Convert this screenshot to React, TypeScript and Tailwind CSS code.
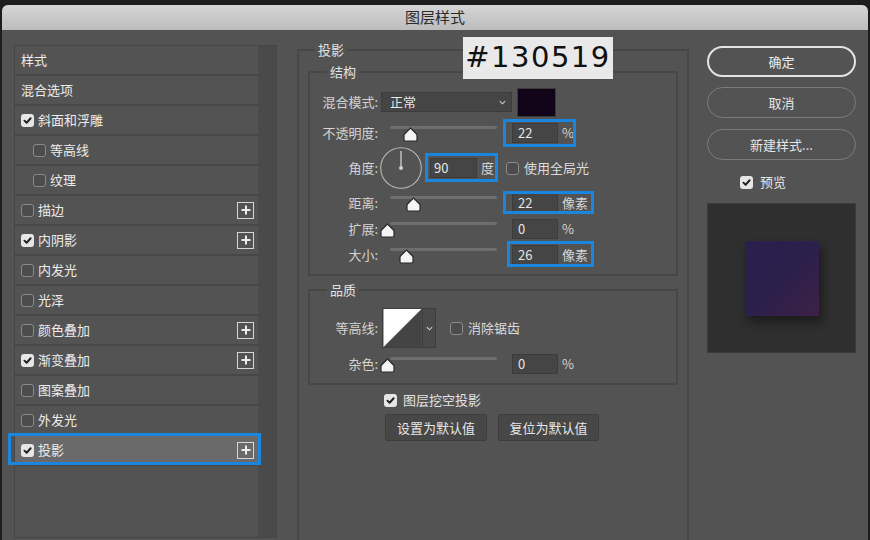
import React from 'react';

type Item = { t: string; cb?: boolean | null; indent?: boolean; plus?: boolean; sel?: boolean };

const items: Item[] = [
  { t: '样式', cb: null },
  { t: '混合选项', cb: null },
  { t: '斜面和浮雕', cb: true },
  { t: '等高线', cb: false, indent: true },
  { t: '纹理', cb: false, indent: true },
  { t: '描边', cb: false, plus: true },
  { t: '内阴影', cb: true, plus: true },
  { t: '内发光', cb: false },
  { t: '光泽', cb: false },
  { t: '颜色叠加', cb: false, plus: true },
  { t: '渐变叠加', cb: true, plus: true },
  { t: '图案叠加', cb: false },
  { t: '外发光', cb: false },
  { t: '投影', cb: true, plus: true, sel: true },
];

const Check = ({ on }: { on?: boolean }) =>
  on ? (
    <span className="flex w-[13px] h-[13px] rounded-[3px] bg-[#e6e6e6] items-center justify-center shrink-0">
      <svg viewBox="0 0 10 10" className="w-[9px] h-[9px]">
        <path d="M1.6 5.2 L4 7.5 L8.5 2.5" fill="none" stroke="#1e1e1e" strokeWidth="2.1" strokeLinecap="round" strokeLinejoin="round" />
      </svg>
    </span>
  ) : (
    <span className="flex w-[13px] h-[13px] rounded-[3px] border border-[#8a8a8a] bg-[#4c4c4c] shrink-0" />
  );

const Plus = () => (
  <span className="w-[17px] h-[17px] border-[1.5px] border-[#d6d6d6] flex items-center justify-center shrink-0">
    <svg viewBox="0 0 10 10" className="w-[10px] h-[10px]">
      <path d="M5 0.5 V9.5 M0.5 5 H9.5" stroke="#ececec" strokeWidth="2" />
    </svg>
  </span>
);

const Thumb = ({ x }: { x: number }) => (
  <svg viewBox="0 0 15 15" className="absolute top-[7px] w-[15px] h-[15px]" style={{ left: x - 7 }}>
    <path d="M7.5 1 L13.5 7 Q14 7.6 14 8.5 L14 12.5 Q14 14 12.5 14 L2.5 14 Q1 14 1 12.5 L1 8.5 Q1 7.6 1.5 7 Z" fill="#f4f4f4" stroke="#2a2a2a" strokeWidth="1.2" strokeLinejoin="round" />
  </svg>
);

const Slider = ({ pos }: { pos: number }) => (
  <div className="relative ml-[12px] w-[107px] h-full shrink-0">
    <div className="absolute left-0 right-0 top-[6px] h-[3px] bg-[#6e6e6e] rounded-full" />
    <Thumb x={pos} />
  </div>
);

const Field = ({ v, unit, hl }: { v: string; unit: string; hl?: string }) => (
  <div className="relative ml-[15px] flex items-center">
    <div className="w-[46px] h-[20px] bg-[#454545] border border-[#3c3c3c] pl-[5px] flex items-center text-[13px] text-[#e6e6e6]">{v}</div>
    <span className="ml-[4px] text-[13px] text-[#d6d6d6]">{unit}</span>
    {hl && <span className={`absolute border-[3px] border-[#1b86de] ${hl}`} />}
  </div>
);

const Label = ({ t }: { t: string }) => (
  <span className="w-[68px] text-right text-[13px] text-[#d4d4d4] shrink-0">{t}</span>
);

export default function App() {
  return (
    <div className="relative w-[870px] h-[540px] bg-[#1d1d1d] pt-[5px] overflow-hidden font-['Noto_Sans_CJK_SC',sans-serif]">
      <div className="h-full mx-[2px] rounded-t-[6px] overflow-hidden bg-[#535353] flex flex-col">
        <div className="h-[25px] shrink-0 bg-gradient-to-b from-[#d5d5d5] to-[#bcbcbc] flex items-center justify-center text-[15px] text-[#2b2b2b]">
          图层样式
        </div>

        <div className="flex items-start">
          {/* left style list */}
          <div className="ml-[12px] mt-[15px] h-[493px] flex border border-[#464646] shrink-0">
            <div className="w-[243px]">
              {items.map((it, i) => (
                <div
                  key={i}
                  className={`relative h-[30px] border-b-2 border-[#474747] flex items-center pr-[4px] text-[13px] text-[#ececec] ${it.sel ? 'bg-[#6a6a6a]' : ''} ${it.indent ? 'pl-[18px]' : 'pl-[6px]'}`}
                >
                  {it.cb !== null && it.cb !== undefined && <Check on={it.cb} />}
                  <span className={it.cb === null ? '' : 'ml-[4px]'}>{it.t}</span>
                  <span className="flex-1" />
                  {it.plus && <Plus />}
                  {it.sel && <span className="absolute -left-[7px] -right-[3px] -top-[3px] -bottom-[1px] border-[3px] border-[#1b86de] z-10" />}
                </div>
              ))}
            </div>
            <div className="w-[18px] bg-[#4a4a4a]" />
          </div>

          {/* middle settings */}
          <fieldset className="ml-[20px] mt-[12px] w-[392px] h-[520px] border-2 border-[#474747] px-[9px] shrink-0">
            <legend className="ml-[7px] px-[3px] text-[13px] leading-[16px] text-[#e2e2e2]">投影</legend>

            <fieldset className="mt-[6px] border-2 border-[#474747] pb-[6px]">
              <legend className="ml-[17px] px-[3px] text-[13px] leading-[16px] text-[#e2e2e2]">结构</legend>

              <div className="mt-[9px] h-[26px] flex items-center">
                <Label t="混合模式:" />
                <div className="ml-[3px] w-[131px] h-[20px] bg-[#454545] border border-[#3c3c3c] flex items-center pl-[8px] pr-[5px] text-[13px] text-[#e6e6e6]">
                  <span>正常</span>
                  <span className="flex-1" />
                  <svg viewBox="0 0 8 5" className="w-[7px] h-[5px]">
                    <path d="M1 1 L4 4 L7 1" fill="none" stroke="#cfcfcf" strokeWidth="1.2" />
                  </svg>
                </div>
                <div className="ml-[5px] w-[39px] h-[29px] bg-[#130519] border border-[#3a3a3a]" />
              </div>

              <div className="mt-[5px] h-[26px] flex items-center">
                <Label t="不透明度:" />
                <Slider pos={20} />
                <Field v="22" unit="%" hl="-left-[9px] -top-[4px] w-[73px] h-[28px]" />
              </div>

              <div className="h-[44px] flex items-center">
                <Label t="角度:" />
                <svg viewBox="0 0 42 42" className="ml-[2px] w-[42px] h-[42px] shrink-0">
                  <circle cx="21" cy="21" r="20.3" fill="none" stroke="#b9b9b9" strokeWidth="1.1" />
                  <path d="M21 21 V4" stroke="#d0d0d0" strokeWidth="1.3" />
                  <circle cx="21" cy="21" r="2" fill="#d0d0d0" />
                </svg>
                <div className="relative ml-[8px] flex items-center">
                  <div className="w-[47px] h-[20px] bg-[#454545] border border-[#3c3c3c] pl-[3px] flex items-center text-[13px] text-[#e6e6e6]">90</div>
                  <span className="ml-[4px] text-[13px] text-[#d6d6d6]">度</span>
                  <span className="absolute -left-[5px] -top-[5px] w-[73px] h-[29px] border-[3px] border-[#1b86de]" />
                </div>
                <div className="ml-[12px]"><Check on={false} /></div>
                <span className="ml-[5px] text-[13px] text-[#dcdcdc]">使用全局光</span>
              </div>

              <div className="h-[26px] flex items-center">
                <Label t="距离:" />
                <Slider pos={23} />
                <Field v="22" unit="像素" hl="-left-[9px] -top-[2px] w-[91px] h-[23px]" />
              </div>

              <div className="h-[26px] flex items-center">
                <Label t="扩展:" />
                <Slider pos={-3} />
                <Field v="0" unit="%" />
              </div>

              <div className="h-[26px] flex items-center">
                <Label t="大小:" />
                <Slider pos={16} />
                <Field v="26" unit="像素" hl="-left-[5px] -top-[4px] w-[87px] h-[26px]" />
              </div>
            </fieldset>

            <fieldset className="mt-[6px] border-2 border-[#474747] pb-[6px]">
              <legend className="ml-[17px] px-[3px] text-[13px] leading-[16px] text-[#e2e2e2]">品质</legend>

              <div className="mt-[10px] h-[40px] flex items-center">
                <Label t="等高线:" />
                <div className="ml-[4px] flex h-[40px] border border-[#3e3e3e]">
                  <svg viewBox="0 0 40 40" className="w-[39px] h-[38px]">
                    <rect width="40" height="40" fill="#444444" />
                    <path d="M0 0 H40 L0 40 Z" fill="#ffffff" />
                  </svg>
                  <div className="w-[13px] bg-[#4a4a4a] border-l border-[#3c3c3c] flex items-center justify-center">
                    <svg viewBox="0 0 8 5" className="w-[7px] h-[5px]">
                      <path d="M1 1 L4 4 L7 1" fill="none" stroke="#cfcfcf" strokeWidth="1.2" />
                    </svg>
                  </div>
                </div>
                <div className="ml-[14px]"><Check on={false} /></div>
                <span className="ml-[5px] text-[13px] text-[#dcdcdc]">消除锯齿</span>
              </div>

              <div className="mt-[3px] h-[26px] flex items-center">
                <Label t="杂色:" />
                <Slider pos={-3} />
                <Field v="0" unit="%" />
              </div>
            </fieldset>

            <div className="mt-[7px] pl-[76px] h-[16px] flex items-center">
              <Check on />
              <span className="ml-[6px] text-[13px] text-[#e2e2e2]">图层挖空投影</span>
            </div>
            <div className="mt-[6px] pl-[77px] flex gap-[11px]">
              <button className="w-[102px] h-[27px] bg-[#474747] border border-[#3d3d3d] rounded-[2px] text-[13px] text-[#e6e6e6]">设置为默认值</button>
              <button className="w-[101px] h-[27px] bg-[#474747] border border-[#3d3d3d] rounded-[2px] text-[13px] text-[#e6e6e6]">复位为默认值</button>
            </div>
          </fieldset>

          {/* right buttons */}
          <div className="ml-[18px] mt-[16px] w-[149px] flex flex-col shrink-0">
            <button className="h-[31px] rounded-full border-2 border-[#e4e4e4] text-[13px] text-[#ededed]">确定</button>
            <button className="mt-[10px] h-[31px] rounded-full border-[1.5px] border-[#7c7c7c] text-[13px] text-[#e6e6e6]">取消</button>
            <button className="mt-[11px] h-[31px] rounded-full border-[1.5px] border-[#7c7c7c] text-[13px] text-[#e6e6e6]">新建样式...</button>
            <div className="mt-[14px] h-[16px] pl-[33px] flex items-center">
              <Check on />
              <span className="ml-[7px] text-[13px] text-[#e6e6e6]">预览</span>
            </div>
            <div className="mt-[13px] h-[150px] bg-[#2f2f2f] border border-[#3b3b3b] flex items-center justify-center">
              <div className="w-[74px] h-[75px] bg-gradient-to-br from-[#2a1f4e] via-[#2b1f4b] to-[#3d2146] shadow-[3px_6px_10px_rgba(0,0,0,0.45)]" />
            </div>
          </div>
        </div>
      </div>

      {/* colour annotation */}
      <div className="absolute left-[463px] top-[37px] w-[150px] h-[42px] bg-[#e9e9e9] flex items-center justify-center text-[29px] tracking-[1.5px] text-[#111111] font-['DejaVu_Sans',sans-serif]">
        #130519
      </div>
    </div>
  );
}
